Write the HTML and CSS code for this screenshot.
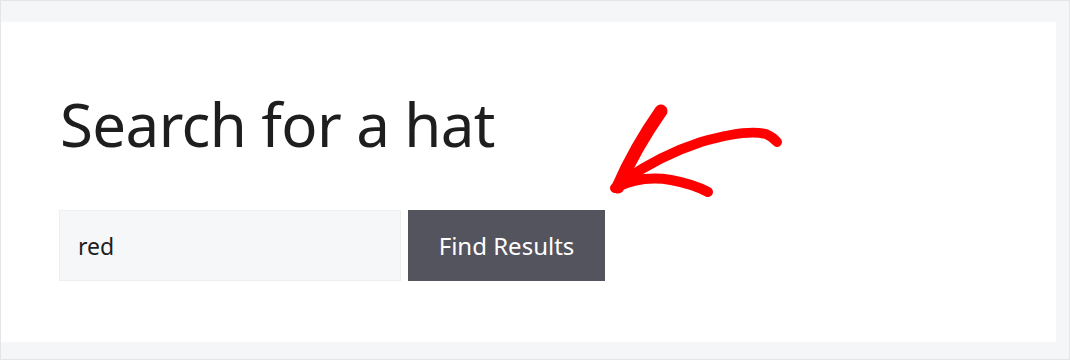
FILE: index.html
```html
<!DOCTYPE html>
<html lang="en">
<head>
<meta charset="utf-8">
<title>Search for a hat</title>
<link rel="stylesheet" href="styles.css">
</head>
<body>
<div class="frame">
  <main class="panel">
    <h1 class="title">Search for a hat</h1>
    <form class="search">
      <input class="search-input" type="text" value="red" aria-label="Search">
      <button class="search-button" type="button">Find Results</button>
    </form>
    <svg class="arrow" width="200" height="120" viewBox="590 95 200 120" aria-hidden="true">
      <g fill="none" stroke="#ff0000" stroke-linecap="round" stroke-linejoin="round">
        <path d="M660,111 Q634,148 617,187" stroke-width="13"/>
        <path d="M622,181 Q660,155 700,142 Q745,129 765,134 Q772,137 776,142" stroke-width="10"/>
        <path d="M614,188 Q640,175 670,180 Q692,184 707,192" stroke-width="10"/>
      </g>
    </svg>
  </main>
</div>
</body>
</html>
```
FILE: styles.css
```css
html, body {
  margin: 0;
  padding: 0;
}

body {
  font-family: "Noto Sans", "Open Sans", sans-serif;
  color: #1e1e1e;
  background: #ffffff;
}

.frame {
  box-sizing: border-box;
  width: 1070px;
  height: 360px;
  border: 1px solid #e3e5e8;
  background: #f5f6f8;
  padding: 21px 13px 17px 0;
  display: flex;
}

.panel {
  position: relative;
  flex: 1;
  background: #ffffff;
  padding: 0 0 0 58px;
}

.title {
  margin: 0;
  padding: 62px 0 0 1px;
  font-size: 60px;
  font-weight: 400;
  line-height: 80px;
  color: #1e1e1e;
  letter-spacing: -0.6px;
}

.search {
  display: flex;
  gap: 7px;
  margin-top: 46px;
}

.search-input {
  box-sizing: border-box;
  width: 342px;
  height: 71px;
  border: 1px solid #eceef0;
  background: #f6f7f9;
  padding: 0 18px;
  font-family: inherit;
  font-size: 23px;
  color: #1e1e1e;
  outline: none;
}

.search-button {
  box-sizing: border-box;
  width: 197px;
  height: 71px;
  border: none;
  background: #54545e;
  color: #ffffff;
  font-family: inherit;
  font-size: 24px;
  padding: 0;
  cursor: pointer;
}

.arrow {
  position: absolute;
  left: 590px;
  top: 73px;
}
```
